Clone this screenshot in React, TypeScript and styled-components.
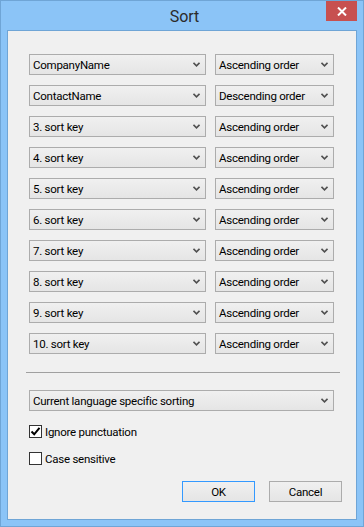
import React from 'react';
import styled, { createGlobalStyle } from 'styled-components';

const GlobalStyle = createGlobalStyle`
  body {
    margin: 0;
    font-family: 'Segoe UI', Roboto, 'Open Sans', sans-serif;
  }
`;

const Window = styled.div`
  width: 364px;
  height: 527px;
  box-sizing: border-box;
  border: 1px solid #6fa5d6;
  background: #8bc4f7;
  padding: 0 6px 6px;
  display: flex;
  flex-direction: column;
`;

const TitleBar = styled.div`
  height: 29px;
  min-height: 0;
  display: grid;
  grid-template-columns: 1fr auto 1fr;
  grid-template-rows: 29px;
`;

const Title = styled.div`
  grid-column: 2;
  font-size: 16px;
  line-height: 29px;
  padding: 1px 0 0 5px;
  color: #2b2b2b;
`;

const CloseButton = styled.div`
  grid-column: 3;
  justify-self: end;
  width: 31px;
  height: 20px;
  background: #c75050;
  display: flex;
  align-items: center;
  justify-content: center;
`;

const Client = styled.div`
  flex: 1;
  border: 1px solid #6fa5d6;
  background: #f0f0f0;
  padding: 23px 22px 0 21px;
  display: flex;
  flex-direction: column;
`;

const Rows = styled.div`
  display: flex;
  flex-direction: column;
  gap: 10px;
`;

const Row = styled.div`
  display: flex;
  gap: 9px;
`;

const Combo = styled.div<{ $width: number }>`
  width: ${(p) => p.$width}px;
  height: 21px;
  box-sizing: border-box;
  border: 1px solid #acacac;
  background: linear-gradient(#f0f0f0, #e5e5e5);
  display: flex;
  align-items: center;
  justify-content: space-between;
  padding: 0 5px 0 3px;
  font-size: 11.5px;
  letter-spacing: -0.25px;
  color: #000;
`;

const Separator = styled.div`
  height: 1px;
  width: 314px;
  margin: 18px 0 17px -3px;
  background: #a0a0a0;
`;

const CheckRow = styled.div<{ $top: number }>`
  display: flex;
  align-items: center;
  gap: 3px;
  height: 13px;
  margin-top: ${(p) => p.$top}px;
  font-size: 11.5px;
  letter-spacing: -0.25px;
  color: #000;
`;

const Box = styled.div`
  width: 13px;
  height: 13px;
  box-sizing: border-box;
  border: 1px solid #333;
  background: #fff;
  display: flex;
  align-items: center;
  justify-content: center;
`;

const Buttons = styled.div`
  display: flex;
  justify-content: flex-end;
  gap: 14px;
  margin: 16px -8px 0 0;
`;

const Button = styled.div<{ $default?: boolean }>`
  width: 73px;
  height: 21px;
  box-sizing: border-box;
  border: 1px solid ${(p) => (p.$default ? '#3399ff' : '#acacac')};
  background: linear-gradient(#f0f0f0, #e5e5e5);
  display: flex;
  align-items: center;
  justify-content: center;
  font-size: 11.5px;
  letter-spacing: -0.25px;
  color: #000;
`;

const Chevron = () => (
  <svg width="7" height="5" viewBox="0 0 7 5">
    <path d="M0.5 0.8 L3.5 3.8 L6.5 0.8" fill="none" stroke="#505050" strokeWidth="1.6" />
  </svg>
);

const Select: React.FC<{ width: number; value: string }> = ({ width, value }) => (
  <Combo $width={width}>
    <span>{value}</span>
    <Chevron />
  </Combo>
);

const keys = [
  ['CompanyName', 'Ascending order'],
  ['ContactName', 'Descending order'],
  ['3. sort key', 'Ascending order'],
  ['4. sort key', 'Ascending order'],
  ['5. sort key', 'Ascending order'],
  ['6. sort key', 'Ascending order'],
  ['7. sort key', 'Ascending order'],
  ['8. sort key', 'Ascending order'],
  ['9. sort key', 'Ascending order'],
  ['10. sort key', 'Ascending order'],
];

const App: React.FC = () => {
  return (
    <>
      <GlobalStyle />
      <Window>
        <TitleBar>
          <Title>Sort</Title>
          <CloseButton>
            <svg width="10" height="9" viewBox="0 0 10 9">
              <path d="M1 0.5 L9 8.5 M9 0.5 L1 8.5" stroke="#fff" strokeWidth="2" />
            </svg>
          </CloseButton>
        </TitleBar>
        <Client>
          <Rows>
            {keys.map(([field, order]) => (
              <Row key={field}>
                <Select width={177} value={field} />
                <Select width={119} value={order} />
              </Row>
            ))}
          </Rows>
          <Separator />
          <Select width={305} value="Current language specific sorting" />
          <CheckRow $top={14}>
            <Box>
              <svg width="11" height="11" viewBox="0 0 11 11">
                <path d="M1.5 5.5 L4.2 8.3 L9.5 1.8" fill="none" stroke="#000" strokeWidth="2" />
              </svg>
            </Box>
            <span>Ignore punctuation</span>
          </CheckRow>
          <CheckRow $top={14}>
            <Box />
            <span>Case sensitive</span>
          </CheckRow>
          <Buttons>
            <Button $default>OK</Button>
            <Button>Cancel</Button>
          </Buttons>
        </Client>
      </Window>
    </>
  );
};

export default App;
